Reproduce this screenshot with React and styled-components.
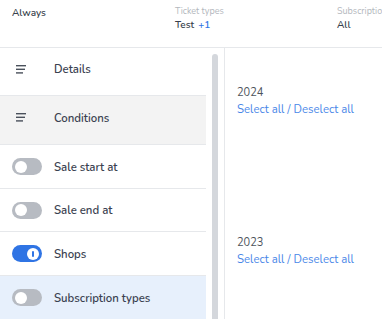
import styled, { createGlobalStyle } from "styled-components";

const Global = createGlobalStyle`
  html, body { margin: 0; padding: 0; background: #fff; }
  body { font-family: "Nunito", "Lato", "Open Sans", sans-serif; color: #3a4150; }
  * { box-sizing: border-box; }
`;

const Page = styled.div`
  width: 382px;
  height: 319px;
  overflow: hidden;
  display: flex;
  flex-direction: column;
`;

const Header = styled.div`
  height: 48px;
  flex: none;
  border-bottom: 1px solid #e6e8eb;
  display: grid;
  grid-template-columns: 163px 162px 100px;
  padding: 6px 0 0 12px;
`;

const Field = styled.div`
  display: flex;
  flex-direction: column;
  white-space: nowrap;
`;

const Label = styled.div`
  font-size: 9px;
  line-height: 11px;
  color: #b3b7bd;
  height: 11px;
`;

const Value = styled.div`
  font-size: 10px;
  line-height: 14px;
  font-weight: 600;
  color: #383f4c;
  margin-top: ${(p) => (p.$top ? "0" : "1px")};
`;

const Plus = styled.span`
  color: #2f74e4;
  margin-left: 4px;
`;

const Body = styled.div`
  flex: 1;
  display: flex;
  min-height: 0;
`;

const Sidebar = styled.div`
  width: 225px;
  flex: none;
  display: flex;
  border-right: 1px solid #e6e8eb;
`;

const List = styled.div`
  width: 206px;
  display: flex;
  flex-direction: column;
`;

const Track = styled.div`
  width: 18px;
  padding: 6px 6px 0;
`;

const Thumb = styled.div`
  width: 6px;
  height: 100%;
  background: #d4d7dc;
  border-radius: 3px 3px 0 0;
`;

const Row = styled.div`
  height: ${(p) => p.$h || 44}px;
  flex: none;
  display: flex;
  align-items: center;
  padding-left: ${(p) => (p.$tall ? "16px" : "12px")};
  padding-bottom: ${(p) => (p.$tall ? "5px" : "0")};
  border-bottom: 1px solid ${(p) => (p.$plain ? "transparent" : "#e6e8eb")};
  background: ${(p) => p.$bg || "#fff"};
  font-size: 11.4px;
  font-weight: 600;
  color: #3a4150;
`;

const IconBox = styled.div`
  width: ${(p) => (p.$wide ? "38px" : "42px")};
  flex: none;
  display: flex;
  align-items: center;
`;

const Toggle = styled.div`
  width: 30px;
  height: 17px;
  border-radius: 9px;
  background: ${(p) => (p.$on ? "#2f74e4" : "#b7bbc2")};
  display: flex;
  align-items: center;
  justify-content: ${(p) => (p.$on ? "flex-end" : "flex-start")};
  padding: 0 3px;
`;

const Knob = styled.div`
  width: 12px;
  height: 12px;
  border-radius: 50%;
  background: #fff;
  display: flex;
  align-items: center;
  justify-content: center;

  &::after {
    content: "";
    display: ${(p) => (p.$on ? "block" : "none")};
    width: 2px;
    height: 6px;
    border-radius: 1px;
    background: #2f74e4;
  }
`;

const Content = styled.div`
  flex: 1;
  display: flex;
  flex-direction: column;
  padding: 37px 0 0 12px;
  gap: 118px;
`;

const Group = styled.div`
  display: flex;
  flex-direction: column;
`;

const Year = styled.div`
  font-size: 11px;
  line-height: 16px;
  color: #4d535c;
`;

const Links = styled.div`
  font-size: 11.4px;
  line-height: 16px;
  color: #4a87e8;
  white-space: nowrap;
`;

const Lines = () => (
  <svg width="11" height="9" viewBox="0 0 11 9">
    <rect x="0" y="0" width="10" height="1.4" fill="#4a505b" />
    <rect x="0" y="3.6" width="9" height="1.4" fill="#4a505b" />
    <rect x="0" y="7.2" width="7" height="1.4" fill="#4a505b" />
  </svg>
);

const toggles = [
  { label: "Sale start at", on: false, h: 44 },
  { label: "Sale end at", on: false, h: 43 },
  { label: "Shops", on: true, h: 44 },
  { label: "Subscription types", on: false, h: 44, bg: "#e7f0fc", plain: true },
];

export default function App() {
  return (
    <Page>
      <Global />
      <Header>
        <Field>
          <Value $top>Always</Value>
        </Field>
        <Field>
          <Label>Ticket types</Label>
          <Value>
            Test<Plus>+1</Plus>
          </Value>
        </Field>
        <Field>
          <Label>Subscription types</Label>
          <Value>All</Value>
        </Field>
      </Header>
      <Body>
        <Sidebar>
          <List>
            <Row $tall $h={48}>
              <IconBox $wide>
                <Lines />
              </IconBox>
              Details
            </Row>
            <Row $tall $h={49} $bg="#f3f3f3">
              <IconBox $wide>
                <Lines />
              </IconBox>
              Conditions
            </Row>
            {toggles.map((t) => (
              <Row key={t.label} $h={t.h} $bg={t.bg} $plain={t.plain}>
                <IconBox>
                  <Toggle $on={t.on}>
                    <Knob $on={t.on} />
                  </Toggle>
                </IconBox>
                {t.label}
              </Row>
            ))}
          </List>
          <Track>
            <Thumb />
          </Track>
        </Sidebar>
        <Content>
          <Group>
            <Year>2024</Year>
            <Links>Select all / Deselect all</Links>
          </Group>
          <Group>
            <Year>2023</Year>
            <Links>Select all / Deselect all</Links>
          </Group>
        </Content>
      </Body>
    </Page>
  );
}
